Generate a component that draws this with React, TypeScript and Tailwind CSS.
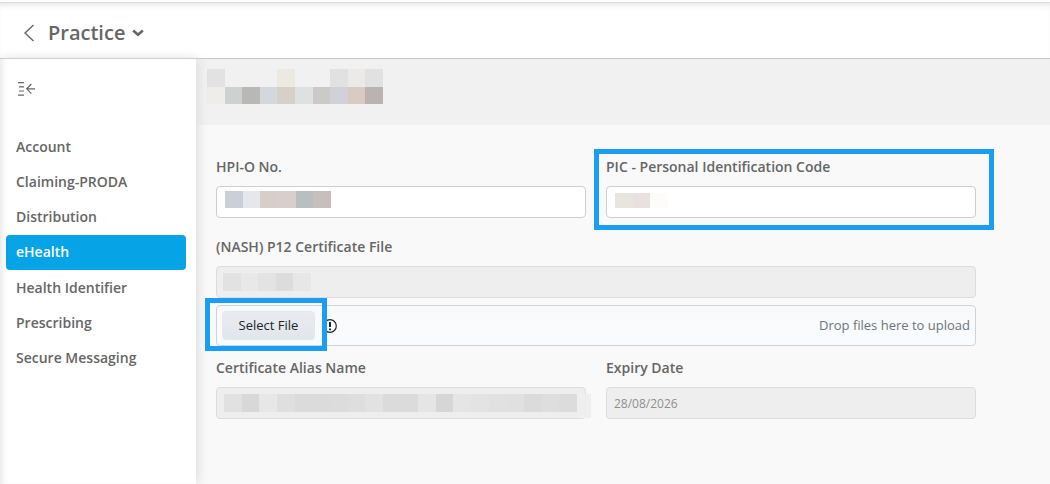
import React, { useState } from 'react';

const NAV_ITEMS = [
  'Account',
  'Claiming-PRODA',
  'Distribution',
  'eHealth',
  'Health Identifier',
  'Prescribing',
  'Secure Messaging',
];

const TITLE_CELLS = [
  '#e2e2e2', '#f1f1f1', '#f1f1f1', '#f1f1f1', '#ece8e2', '#f1f1f1', '#f1f1f1', '#e1e1e1', '#ebeae8', '#e1e1e1',
  '#eeede8', '#ccd1d1', '#b8b8b6', '#d4d8de', '#d9cfc9', '#dde1e2', '#cacac8', '#d1d1d7', '#d9cbc1', '#bcb2b0',
];
const HPIO_CELLS = ['#cacfd9', '#e5e7ed', '#d7cec9', '#d8cecc', '#b9bec0', '#c7bfbb'];
const PIC_CELLS = ['#e8e5df', '#eae0e0', '#fefcfa'];
const FILE_CELLS = ['#e2e2e2', '#e8e8e8', '#e3e3e3', '#dcdcdc', '#e7e7e7'];
const ALIAS_CELLS = [
  '#e1e1e1', '#d8d8d8', '#e7e7e7', '#dfdfdf', '#dbdbdb', '#dbdbdb', '#dcdcdc', '#dedede', '#e2e2e2', '#dbdbdb',
  '#dbdbdb', '#e5e5e5', '#d6d6d6', '#e5e5e5', '#e3e3e3', '#e1e1e1', '#e0e0e0', '#dbdbdb', '#dedede', '#dcdcdc',
];

// Blocks that hide a private value
const Redacted = ({ cells, className }: { cells: string[]; className: string }) => (
  <div aria-hidden="true" className={`grid ${className}`}>
    {cells.map((color, i) => (
      <span key={i} style={{ backgroundColor: color }} />
    ))}
  </div>
);

interface FieldProps {
  id: string;
  label: string;
  value?: string;
  disabled?: boolean;
  children?: React.ReactNode;
}

const Field = ({ id, label, value = '', disabled, children }: FieldProps) => {
  const [text, setText] = useState(value);

  return (
    <div className="relative flex flex-1 flex-col gap-2.5">
      <label htmlFor={id} className="text-sm leading-[18px] font-semibold">
        {label}
      </label>
      <input
        id={id}
        type="text"
        value={text}
        disabled={disabled}
        onChange={(e) => setText(e.target.value)}
        className="h-8 w-full rounded border border-[#cecece] bg-white px-[7px] text-xs disabled:border-[#dcdcdc] disabled:bg-[#eeeeee] disabled:text-[#8f8f8f]"
      />
      {children}
    </div>
  );
};

const Header = () => (
  <header className="flex h-[57px] items-center border-t border-b border-t-[#dedede] border-b-[#c6c6c6] bg-white pl-6 shadow-[inset_0_6px_6px_-4px_#e6e6e6]">
    <button type="button" aria-label="Back" className="mt-1">
      <svg width="11" height="18" viewBox="0 0 11 18" fill="none" stroke="#666" strokeWidth="1.4">
        <path d="M9.5 1 1 9l8.5 8" />
      </svg>
    </button>
    <button type="button" className="mt-1 ml-[13px] flex items-center gap-[7px] text-xl leading-7 font-semibold">
      Practice
      <svg width="12" height="8" viewBox="0 0 12 8" fill="none" stroke="#666" strokeWidth="2.6">
        <path d="m1.2 1.5 4.8 4.3 4.8-4.3" />
      </svg>
    </button>
  </header>
);

const Sidebar = () => {
  const [active, setActive] = useState('eHealth');

  return (
    <aside className="z-10 w-[196px] shrink-0 bg-white shadow-[2px_0_10px_#dcdcdc,inset_6px_0_6px_-4px_#e6e6e6]">
      <button type="button" aria-label="Collapse menu" className="mt-[23px] ml-[18px] block">
        <svg width="17" height="14" viewBox="0 0 17 14" fill="none" stroke="#666" strokeWidth="1.2">
          <path d="M0 .7h6M1 4.8h5M1 9h5M0 13.2h6M17 6.8H9M13.4 2 8.7 6.8l4.7 4.8" />
        </svg>
      </button>
      <nav className="mt-[33px] flex h-[247px] flex-col justify-between pr-[10px] pl-1.5">
        {NAV_ITEMS.map((item) => (
          <a
            key={item}
            href="#"
            onClick={() => setActive(item)}
            className={`flex h-[35px] items-center rounded px-2.5 text-sm font-semibold ${
              item === active ? 'bg-[#06a4e7] text-white' : ''
            }`}
          >
            {item}
          </a>
        ))}
      </nav>
    </aside>
  );
};

const App = () => {
  return (
    <div className="flex min-h-screen flex-col bg-white pt-[2px] font-['Open_Sans','Noto_Sans',sans-serif] text-[#666666]">
      <Header />
      <div className="flex flex-1">
        <Sidebar />
        <main className="min-w-0 flex-1 bg-[#f9f9f9]">
          <div className="h-[66px] bg-[#f1f1f1] pt-2.5 pl-[11px]">
            <Redacted cells={TITLE_CELLS} className="h-[35px] w-[176px] grid-cols-10 grid-rows-2" />
          </div>

          <form className="ml-5 max-w-[760px] pt-[33px]">
            <div className="flex gap-5">
              <Field id="hpio" label="HPI-O No.">
                <Redacted cells={HPIO_CELLS} className="absolute top-[33px] left-[9px] h-[17px] w-[106px] grid-cols-6" />
              </Field>
              <Field id="pic" label="PIC - Personal Identification Code">
                <Redacted cells={PIC_CELLS} className="absolute top-[35px] left-[9px] h-[15px] w-[53px] grid-cols-3" />
                <div className="pointer-events-none absolute -top-[9px] -right-[18px] -bottom-3 -left-3 border-5 border-[#1a9df5]" />
              </Field>
            </div>

            <div className="mt-5 flex">
              <Field id="certificate" label="(NASH) P12 Certificate File" disabled>
                <Redacted cells={FILE_CELLS} className="absolute top-[35px] left-[7px] h-[18px] w-[88px] grid-cols-5" />
              </Field>
            </div>
            <div className="mt-[7px] flex h-[41px] items-center rounded border border-[#d0d3d6] bg-linear-to-b from-[#f9f9f9] to-[#f9fcff] px-[5px]">
              <div className="relative">
                <button
                  type="button"
                  className="block h-[29px] w-[93px] rounded border border-[#e4e7eb] bg-linear-to-b from-[#e9ebef] to-[#e2e6ea] text-[13px] text-[#212529]"
                >
                  Select File
                </button>
                <div className="pointer-events-none absolute -top-[13px] -right-3 -bottom-[11px] -left-[17px] z-10 border-5 border-[#1a9df5]" />
              </div>
              <svg className="ml-2" width="14" height="14" viewBox="0 0 14 14" fill="none" stroke="#212529">
                <circle cx="7" cy="7" r="6.3" strokeWidth="1.2" />
                <path d="M7 3v5M7 9.5v1.8" strokeWidth="2" />
              </svg>
              <span className="ml-auto text-[13px] text-[#6c757d]">Drop files here to upload</span>
            </div>

            <div className="mt-[13px] flex gap-5">
              <Field id="alias" label="Certificate Alias Name" disabled>
                <div className="absolute top-[35px] left-2 flex">
                  <Redacted cells={ALIAS_CELLS} className="h-[18px] w-[353px] grid-cols-20" />
                  <span className="h-6 w-3.5 bg-[#efefef]" />
                </div>
              </Field>
              <Field id="expiry" label="Expiry Date" value="28/08/2026" disabled />
            </div>
          </form>
        </main>
      </div>
    </div>
  );
};

export default App;
